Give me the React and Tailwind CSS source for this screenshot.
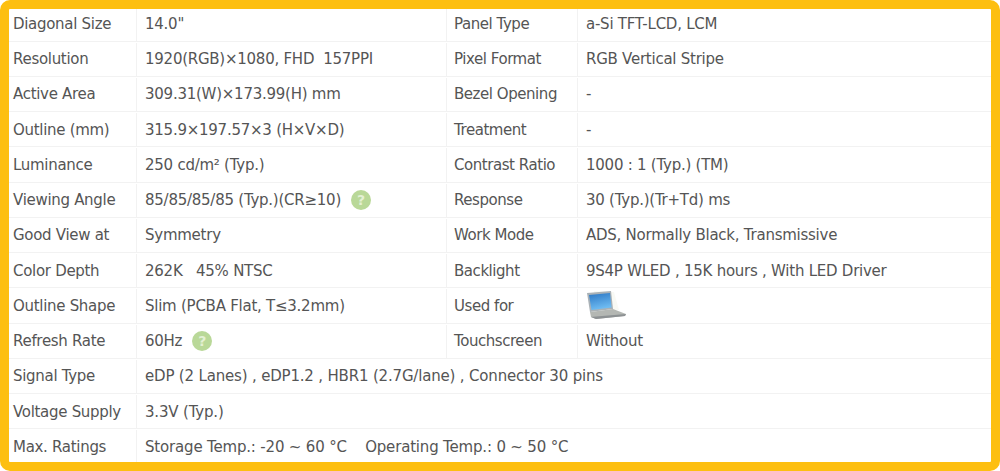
const ROWS = [
  ['Diagonal Size', '14.0"', 'Panel Type', 'a-Si TFT-LCD, LCM'],
  ['Resolution', '1920(RGB)×1080, FHD\u00a0\u00a0157PPI', 'Pixel Format', 'RGB Vertical Stripe'],
  ['Active Area', '309.31(W)×173.99(H) mm', 'Bezel Opening', '-'],
  ['Outline (mm)', '315.9×197.57×3 (H×V×D)', 'Treatment', '-'],
  ['Luminance', '250 cd/m² (Typ.)', 'Contrast Ratio', '1000 : 1 (Typ.) (TM)'],
  ['Viewing Angle', '85/85/85/85 (Typ.)(CR≥10)', 'Response', '30 (Typ.)(Tr+Td) ms', 'help'],
  ['Good View at', 'Symmetry', 'Work Mode', 'ADS, Normally Black, Transmissive'],
  ['Color Depth', '262K\u00a0\u00a0\u00a045% NTSC', 'Backlight', '9S4P WLED , 15K hours , With LED Driver'],
  ['Outline Shape', 'Slim (PCBA Flat, T≤3.2mm)', 'Used for', 'laptop'],
  ['Refresh Rate', '60Hz', 'Touchscreen', 'Without', 'help'],
];

const WIDE_ROWS = [
  ['Signal Type', 'eDP (2 Lanes) , eDP1.2 , HBR1 (2.7G/lane) , Connector 30 pins'],
  ['Voltage Supply', '3.3V (Typ.)'],
  ['Max. Ratings', 'Storage Temp.: -20 ~ 60 °C\u00a0\u00a0\u00a0\u00a0Operating Temp.: 0 ~ 50 °C'],
];

function HelpIcon() {
  return (
    <span className="ml-[10px] inline-flex h-5 w-5 items-center justify-center rounded-full bg-[#b9d898] text-[14px] font-bold leading-none text-[#e4f0d4]">
      ?
    </span>
  );
}

function LaptopIcon() {
  return (
    <svg width="42" height="32" viewBox="0 0 42 32" className="mb-[3px] block">
      <defs>
        <linearGradient id="screen" x1="0" y1="0" x2="0.3" y2="1">
          <stop offset="0" stopColor="#2a76c4" />
          <stop offset="1" stopColor="#6fbcf2" />
        </linearGradient>
      </defs>
      <path d="M8 2 L28 3 L33 21 L11 22 Z" fill="#f4f5ec" opacity="0.6" />
      <path d="M1 4 L25 2 L27 20 L4 23 Z" fill="#a9b1b6" />
      <path d="M3 6 L24 4 L25.500 18.500 L5.500 21 Z" fill="url(#screen)" />
      <path d="M4 23 L27 20 L40 25 L39 27 L10 30 L5 28 Z" fill="#b4b7b3" />
      <path d="M5 28 L10 30 L39 27 L40 25 L10 27.500 Z" fill="#8d9193" />
    </svg>
  );
}

function Label({ children, className = '' }) {
  return (
    <div className={`flex items-center border-r border-[#f2f2f2] pl-1 ${className}`}>{children}</div>
  );
}

export default function App() {
  return (
    <div
      className="flex h-[471px] w-[1000px] flex-col justify-center overflow-hidden rounded-[10px] border-[9px] border-[#fdbf10] bg-white text-[15px] tracking-[-0.25px] text-[#555555]"
      style={{ fontFamily: '"DejaVu Sans", "Noto Sans", sans-serif' }}
    >
      {ROWS.map(([label, value, label2, value2, extra]) => (
        <div key={label} className="flex h-[35.25px] shrink-0 border-b border-[#f2f2f2] pt-px">
          <Label className="w-[128px] tracking-[-0.3px]">{label}</Label>
          <div className="flex w-[310px] items-center border-r border-[#f2f2f2] pl-[8px]">
            {value}
            {extra === 'help' ? <HelpIcon /> : null}
          </div>
          <Label className="w-[131px] pl-[7px] tracking-[-0.45px]">{label2}</Label>
          <div className="flex flex-1 items-center pl-[8px]">
            {value2 === 'laptop' ? <LaptopIcon /> : value2}
          </div>
        </div>
      ))}
      {WIDE_ROWS.map(([label, value]) => (
        <div key={label} className="flex h-[35.25px] shrink-0 border-b border-[#f2f2f2] pt-px">
          <Label className="w-[128px] tracking-[-0.3px]">{label}</Label>
          <div className="flex flex-1 items-center pl-[8px] tracking-[-0.18px]">{value}</div>
        </div>
      ))}
    </div>
  );
}
